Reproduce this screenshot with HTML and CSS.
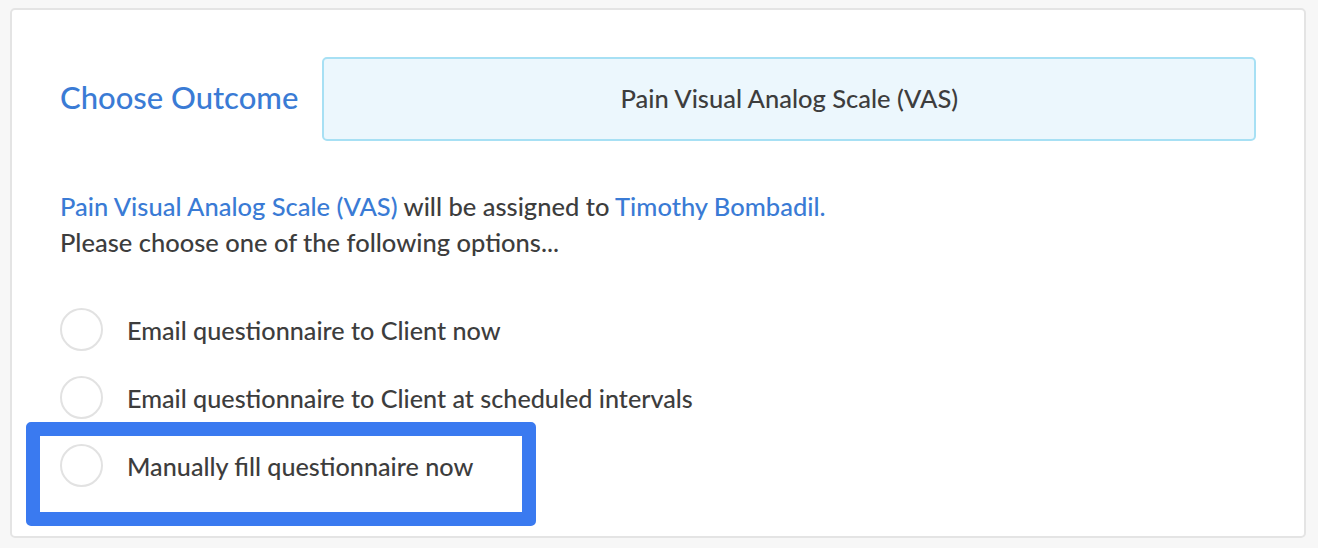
FILE: index.html
```html
<!DOCTYPE html>
<html>
<head>
<meta charset="utf-8">
<link rel="stylesheet" href="styles.css">
</head>
<body>
<div class="card">
  <div class="top-row">
    <h2 class="title">Choose Outcome</h2>
    <div class="select">Pain Visual Analog Scale (VAS)</div>
  </div>
  <p class="info"><span class="link">Pain Visual Analog Scale (VAS)</span> will be assigned to <span class="link">Timothy Bombadil.</span><br>Please choose one of the following options...</p>
  <div class="options">
    <label class="option"><span class="radio"></span><span class="opt-text">Email questionnaire to Client now</span></label>
    <label class="option"><span class="radio"></span><span class="opt-text">Email questionnaire to Client at scheduled intervals</span></label>
    <label class="option"><span class="radio"></span><span class="opt-text">Manually fill questionnaire now</span></label>
  </div>
  <div class="highlight"></div>
</div>
</body>
</html>
```
FILE: styles.css
```css
html, body {
  margin: 0;
  padding: 0;
}
body {
  background: #f7f7f7;
  font-family: Lato, "Open Sans", sans-serif;
  font-weight: 500;
  color: #3d3d3d;
  width: 1318px;
  height: 548px;
  overflow: hidden;
}
.card {
  position: relative;
  margin: 8px 0 0 10px;
  width: 1296px;
  height: 530px;
  box-sizing: border-box;
  background: #fff;
  border: 2px solid #e4e4e4;
  border-radius: 5px;
  padding: 47px 48px 0 48px;
}
.top-row {
  display: flex;
  align-items: center;
  gap: 24px;
}
.title {
  margin: 0 0 4px 0;
  font-size: 31px;
  font-weight: 500;
  color: #3a7bd5;
  white-space: nowrap;
}
.select {
  flex: 0 0 934px;
  height: 84px;
  box-sizing: border-box;
  background: #ecf7fd;
  border: 2px solid #a7e0f4;
  border-radius: 5px;
  display: flex;
  align-items: center;
  justify-content: center;
  padding-bottom: 2px;
  font-size: 25.5px;
  color: #3d3d3d;
}
.info {
  margin: 47px 0 0 0;
  font-size: 25.5px;
  line-height: 36px;
}
.link {
  color: #3a7bd5;
}
.options {
  margin-top: 48px;
  display: flex;
  flex-direction: column;
  gap: 25px;
}
.option {
  display: flex;
  align-items: center;
  gap: 24px;
  font-size: 25.2px;
}
.radio {
  width: 43px;
  height: 43px;
  box-sizing: border-box;
  border: 2px solid #e2e2e2;
  border-radius: 50%;
  flex: none;
}
.highlight {
  position: absolute;
  left: 14px;
  top: 412px;
  width: 510px;
  height: 104px;
  box-sizing: border-box;
  border: 14px solid #3a7af0;
  border-radius: 5px;
}
```
